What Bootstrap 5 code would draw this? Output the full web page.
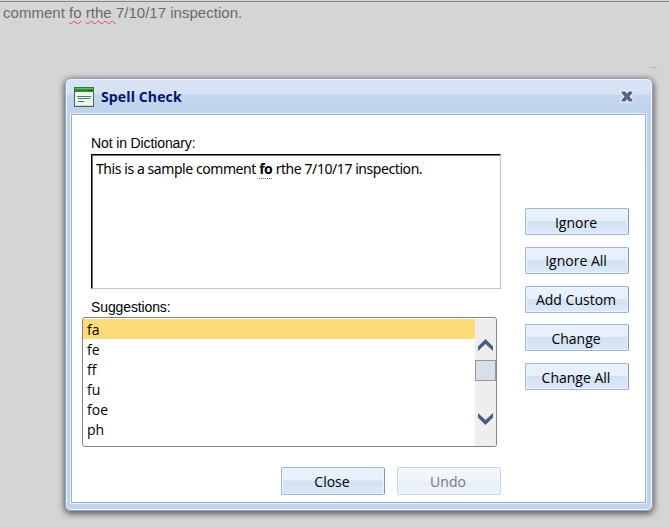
<!DOCTYPE html>
<html lang="en">
<head>
<meta charset="utf-8">
<meta name="viewport" content="width=device-width, initial-scale=1">
<title>Spell Check</title>
<link href="https://cdn.jsdelivr.net/npm/bootstrap@5.3.0/dist/css/bootstrap.min.css" rel="stylesheet">
<style>
body{background:#d5d5d5;font-family:"Liberation Sans",Arial,sans-serif;font-size:14px;line-height:20px;color:#000;height:527px;overflow:hidden}
.page-line{height:22px;border-top:1px solid #858885;margin-top:1px;padding-left:3px;color:#6a6a6a;font-size:15px;line-height:22px;letter-spacing:.02px;white-space:pre}
.wavy{text-decoration:underline wavy #e04a4a 1px;text-underline-offset:2px;text-decoration-skip-ink:none}
.speck{position:absolute;left:651px;top:67px;width:6px;height:1px;background:#a3bda3}
.dialog-window{position:absolute;left:65px;top:78px;width:588px;height:433px;padding:0 6px 8px 6px;border:1px solid #8fa6c5;border-radius:6px;background:linear-gradient(#d9e5f6 0,#d5e2f4 15px,#c5d7ee 16px,#bfd2ec 34px,#c0d3ed 100%);box-shadow:inset 0 0 0 1px #eff5fd,0 2px 6px 1px rgba(0,0,0,.58)}
.dialog-title{height:35px;padding:0 12px 0 2px}
.dialog-title h1{font:bold 14px/34px "Open Sans","Noto Sans",sans-serif;color:#00156e;margin:0 0 0 7px;letter-spacing:.13px}
.dialog-content{height:389px;margin-left:-1px;background:#fff;border:1px solid #9cb2cf;box-shadow:0 0 0 1px #e5eefa;padding:18px 16px 0 10px}
.left-pane{width:420px}
.field-label{height:20px;line-height:21px;margin-left:9px;letter-spacing:-.12px}
.word-box{width:410px;height:135px;margin:1px 0 0 9px;border:1px solid;border-color:#000 #c5c5c5 #c5c5c5 #000;box-shadow:inset 1px 1px #777;padding:4px;font:14px/20px "Noto Sans",sans-serif;letter-spacing:-.43px;white-space:nowrap}
.misspelt{font-weight:700;border-bottom:1px dotted #f03c3c;display:inline-block;line-height:18px}
.pick-list{width:415px;height:130px;border:1px solid #858585;border-radius:3px;overflow:hidden;background:#fff}
.choices{width:392px;margin:1px 0 0;padding:0;list-style:none;font:14px/20px "Open Sans","Noto Sans",sans-serif}
.choices li{height:20px;padding-left:4px;line-height:21px}
.choices .chosen{background:#ffdb7a}
.scroll-rail{width:21px;background:#eee;margin-top:1px}
.scroll-thumb{height:21px;background:#d9dfea;border:1px solid #999}
.tool-button{display:flex;align-items:center;justify-content:center;width:104px;height:27px;padding:2px 2px 0 0;border:1px solid #9bb7db;border-right-color:#7599c8;border-radius:2px;background:linear-gradient(#e9f1fc 0,#e6effc 47%,#d2e1f4 50%,#dce8f8 100%);box-shadow:inset 0 0 0 1px #eaf2fd;color:#000;font:14px/20px "Open Sans","Noto Sans",sans-serif}
.tool-button:disabled{opacity:.55;border-color:#9bb7db;color:#000}
.foot-buttons{gap:12px;padding:20px 1px 0 0}
.foot-buttons .tool-button{height:28px}
.stack{width:104px;gap:11.75px;padding-top:75px}
</style>
<script src="https://cdn.jsdelivr.net/npm/bootstrap@5.3.0/dist/js/bootstrap.bundle.min.js"></script>
</head>
<body>
<div class="page-line">comment <span class="wavy">fo</span> <span class="wavy">rthe </span>7/10/17 inspection.</div>
<div class="speck"></div>
<section class="dialog-window" role="dialog" aria-label="Spell Check">
  <header class="dialog-title d-flex align-items-center">
    <svg width="20" height="20" viewBox="0 0 20 20"><rect x=".5" y=".5" width="19" height="19" fill="#eef6ef" stroke="#4d6552"/><path d="M1 1h18v4H1z" fill="#27952b"/><path d="M1 1h18v1H1z" fill="#71b875"/><path d="M12 3.500h1m1 0h1m1 0h2" stroke="#075c0d"/><path d="M3 9.500h14M4 11.500h12M4 14.500h6" stroke="#39845a" stroke-width="1.200"/><path d="M1 18.500h18" stroke="#cbd9ce"/></svg>
    <h1>Spell Check</h1>
    <svg class="ms-auto" width="14" height="13" viewBox="0 0 14 13"><path d="M1.500 1.500h4L7 4l1.500-2.500h4v1.500L9.500 6.500l3 3.500v1.500h-4L7 9l-1.500 2.500h-4V10l3-3.500-3-3.500z" fill="#56657f" stroke="#f5f9ff" stroke-width="2" paint-order="stroke"/></svg>
  </header>
  <div class="dialog-content d-flex justify-content-between">
    <div class="left-pane">
      <div class="field-label">Not in Dictionary:</div>
      <div class="word-box">This is a sample comment <span class="misspelt">fo</span> rthe 7/10/17 inspection.</div>
      <div class="field-label mt-2">Suggestions:</div>
      <div class="pick-list d-flex">
        <ul class="choices"><li class="chosen">fa</li><li>fe</li><li>ff</li><li>fu</li><li>foe</li><li>ph</li></ul>
        <div class="scroll-rail d-flex flex-column">
          <svg width="21" height="41" viewBox="0 0 21 41"><path d="M3 27.500l7.500-7.500 7.500 7.500v4.500L10.500 25 3 32z" fill="#4d5d80"/></svg>
          <div class="scroll-thumb"></div>
          <svg width="21" height="64" viewBox="0 0 21 64"><path d="M3 32l7.500 7 7.500-7v4.500L10.500 44 3 36.500z" fill="#4d5d80"/></svg>
        </div>
      </div>
      <div class="d-flex justify-content-end foot-buttons">
        <button class="tool-button">Close</button>
        <button class="tool-button" disabled>Undo</button>
      </div>
    </div>
    <div class="stack d-flex flex-column">
      <button class="tool-button">Ignore</button><button class="tool-button">Ignore All</button><button class="tool-button">Add Custom</button><button class="tool-button">Change</button><button class="tool-button">Change All</button>
    </div>
  </div>
</section>
</body>
</html>
